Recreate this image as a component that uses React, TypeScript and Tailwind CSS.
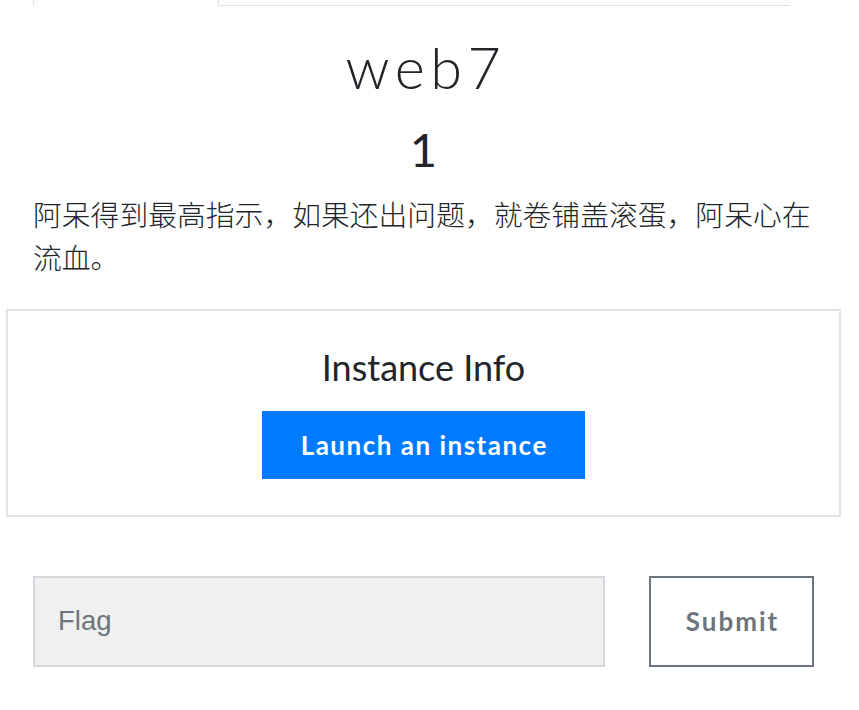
export default function App() {
  return (
    <div className="min-h-screen bg-white">
      <div className="mx-[33px] w-[781px]">
        {/* tabs */}
        <div className="flex h-[6px] w-[757px]">
          <div className="h-[6px] w-[186px] border-x border-[#dee2e6]" />
          <div className="h-[6px] flex-1 border-b border-[#dee2e6]" />
        </div>

        <h2
          className="mt-[26px] pl-[5px] text-center text-[57.6px] font-light leading-[1.2] tracking-[5.5px] text-[#212529]"
          style={{ fontFamily: 'Lato, "Open Sans", sans-serif' }}
        >
          web7
        </h2>
        <h3
          className="mt-[20px] text-center text-[47px] font-normal leading-[1.2] text-[#212529]"
          style={{ fontFamily: 'Lato, "Open Sans", sans-serif' }}
        >
          1
        </h3>
        <p
          className="mt-[14px] text-[28.8px] font-light leading-[43.2px] text-[#212529]"
          style={{ fontFamily: '"Noto Sans CJK SC", "Noto Sans", sans-serif' }}
        >
          阿呆得到最高指示，如果还出问题，就卷铺盖滚蛋，阿呆心在流血。
        </p>

        {/* instance box */}
        <div className="-mx-[27px] mt-[31px] flex h-[208px] flex-col items-center border-2 border-[#e3e3e3] pt-[35px]">
          <h4
            className="text-[36px] leading-[1.2] text-[#212529]"
            style={{ fontFamily: 'Lato, "Open Sans", sans-serif' }}
          >
            Instance Info
          </h4>
          <button
            className="mt-[22px] flex h-[68px] w-[323px] items-center justify-center bg-[#007bff] pl-[1.5px] text-[26px] font-bold tracking-[1.5px] text-white"
            style={{ fontFamily: 'Lato, "Open Sans", sans-serif' }}
          >
            Launch an instance
          </button>
        </div>

        {/* flag row */}
        <div className="mt-[59px] flex gap-[44px]">
          <input
            placeholder="Flag"
            className="h-[91px] w-[572px] shrink-0 border-2 border-[#d3d8de] bg-[#f0f0f0] pl-[23px] text-[27.5px] text-[#495057] outline-none placeholder:text-[#6c757d]"
            style={{ fontFamily: '"Liberation Sans", Arial, sans-serif' }}
          />
          <button
            className="h-[91px] w-[165px] shrink-0 border-2 border-[#6c757d] bg-white pl-[2px] text-[26px] font-bold tracking-[2px] text-[#6c757d]"
            style={{ fontFamily: 'Lato, "Open Sans", sans-serif' }}
          >
            Submit
          </button>
        </div>
      </div>
    </div>
  )
}
